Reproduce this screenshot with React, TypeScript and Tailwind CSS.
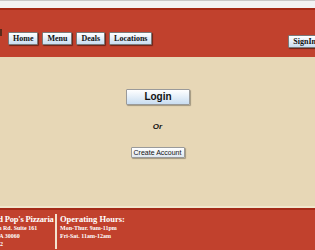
import React from 'react';

const NAV = ['Home', 'Menu', 'Deals', 'Locations'];

function NavButton({ label, className = '' }: { label: string; className?: string }) {
  return (
    <button
      type="button"
      className={
        'h-[13px] shrink-0 rounded-[1px] border border-[#7a7a7a] bg-gradient-to-b from-white to-[#c9ddf1] px-[4px] text-[8px] font-bold leading-[11px] text-[#111] shadow-[1px_1px_1px_rgba(0,0,0,0.45)] ' +
        className
      }
      style={{ fontFamily: '"Liberation Serif", serif' }}
    >
      {label}
    </button>
  );
}

export default function App() {
  return (
    <div className="flex h-[250px] w-[315px] flex-col overflow-hidden bg-[#e7d7b6]">
      {/* browser-ish top strip */}
      <div className="h-[8px] shrink-0 border-t border-[#c8c8c8] bg-[#f3f3f3]" />

      {/* header */}
      <header className="flex h-[49px] shrink-0 items-center border-t-2 border-[#a52a17] bg-[#c1412d] pt-[9px]">
        <div className="mt-[10px] h-[7px] w-[2px] shrink-0 self-start bg-[#5a2a1a]" />
        <nav className="ml-[6px] flex gap-[4px]">
          {NAV.map((n) => (
            <NavButton key={n} label={n} />
          ))}
        </nav>
        <div className="ml-auto -mr-[6px]">
          <NavButton label="SignIn" />
        </div>
      </header>

      {/* body */}
      <main className="flex flex-1 flex-col items-center pt-[32px]">
        <button
          type="button"
          className="ml-[1px] h-[16px] w-[64px] rounded-[1px] border border-[#9a9a9a] bg-gradient-to-b from-white to-[#c9ddf1] text-[10px] font-bold leading-[14px] text-[#111] shadow-[1px_1px_1px_rgba(0,0,0,0.3)]"
          style={{ fontFamily: '"Liberation Sans", sans-serif' }}
        >
          Login
        </button>
        <p
          className="mt-[17px] text-[8px] font-bold italic leading-[10px] text-[#111]"
          style={{ fontFamily: '"Liberation Sans", sans-serif' }}
        >
          Or
        </p>
        <button
          type="button"
          className="mt-[15px] h-[11px] w-[54px] rounded-[1px] border border-[#9a9a9a] bg-gradient-to-b from-white to-[#dfe7f0] text-[7px] leading-[9px] text-[#111] shadow-[1px_1px_1px_rgba(0,0,0,0.3)]"
          style={{ fontFamily: '"Liberation Sans", sans-serif' }}
        >
          Create Account
        </button>
      </main>

      {/* footer */}
      <footer
        className="flex h-[42px] shrink-0 items-start border-t-2 border-[#a52a17] bg-[#c1412d] pt-[4px] text-white shadow-[0_-2px_0_#f1e6cd]"
        style={{ fontFamily: '"Liberation Serif", serif' }}
      >
        <div className="-ml-[31px] w-[88px] shrink-0 border-r-2 border-[#f3e3d0] pb-[1px]">
          <p className="whitespace-nowrap text-[8.5px] font-bold leading-[10px] tracking-[-0.2px]">Mom and Pop's Pizzaria</p>
          <p className="whitespace-nowrap text-[6px] font-bold leading-[8px]">1234 Canton Rd. Suite 161</p>
          <p className="whitespace-nowrap text-[6px] font-bold leading-[8px]">Marietta, GA 30060</p>
          <p className="whitespace-nowrap text-[6px] font-bold leading-[8px]">770-555-1212</p>
        </div>
        <div className="pl-[3px]">
          <p className="whitespace-nowrap text-[8.5px] font-bold leading-[10px]">Operating Hours:</p>
          <p className="whitespace-nowrap text-[6px] font-bold leading-[8px]">Mon-Thur. 9am-11pm</p>
          <p className="whitespace-nowrap text-[6px] font-bold leading-[8px]">Fri-Sat. 11am-12am</p>
        </div>
      </footer>
    </div>
  );
}
